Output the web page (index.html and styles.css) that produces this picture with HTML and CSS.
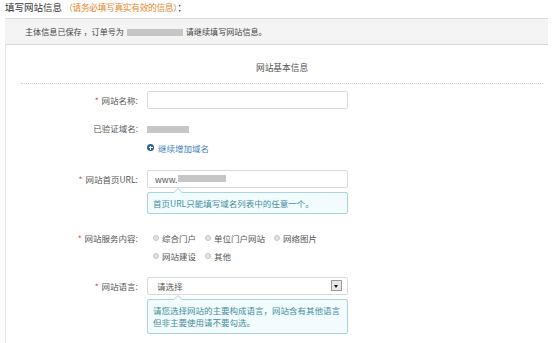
FILE: index.html
```html
<!DOCTYPE html>
<html lang="zh-CN">
<head>
<meta charset="utf-8">
<title>填写网站信息</title>
<link rel="stylesheet" href="styles.css">
</head>
<body>
<div class="page">
  <div class="title">填写网站信息 <span class="warn">（请务必填写真实有效的信息）</span>：</div>
  <div class="notice">主体信息已保存 ，订单号为<span class="mask mask-order"></span> 请继续填写网站信息。</div>
  <div class="panel">
    <div class="section-head">网站基本信息</div>

    <div class="row row-name">
      <div class="label"><span class="req">*</span> 网站名称:</div>
      <div class="field"><div class="input"></div></div>
    </div>

    <div class="row row-domain">
      <div class="label">已验证域名:</div>
      <div class="field"><span class="mask mask-domain"></span></div>
    </div>

    <div class="row row-add">
      <div class="label"></div>
      <div class="field"><a class="add-link"><span class="plus"></span>继续增加域名</a></div>
    </div>

    <div class="row row-url">
      <div class="label"><span class="req">*</span> 网站首页URL:</div>
      <div class="field">
        <div class="input"><span class="val">www.</span><span class="mask mask-url"></span></div>
        <div class="tip">首页URL只能填写域名列表中的任意一个。</div>
      </div>
    </div>

    <div class="row row-service">
      <div class="label"><span class="req">*</span> 网站服务内容:</div>
      <div class="field radios">
        <span class="radio"><i></i>综合门户</span>
        <span class="radio"><i></i>单位门户网站</span>
        <span class="radio"><i></i>网络图片</span>
        <span class="radio"><i></i>网站建设</span>
        <span class="radio"><i></i>其他</span>
      </div>
    </div>

    <div class="row row-lang">
      <div class="label"><span class="req">*</span> 网站语言:</div>
      <div class="field">
        <div class="input select"><span class="val">请选择</span><span class="arrow"></span></div>
        <div class="tip tip-2">请您选择网站的主要构成语言，网站含有其他语言<br>但非主要使用请不要勾选。</div>
      </div>
    </div>
  </div>
</div>
</body>
</html>
```

FILE: styles.css
```css
* { box-sizing: border-box; }
html, body { margin: 0; padding: 0; background: #fff; }
body {
  font-family: "Microsoft YaHei", "Noto Sans CJK SC", "Noto Sans", sans-serif;
  font-size: 8.5px;
  color: #555;
  width: 553px;
  height: 343px;
  overflow: hidden;
}
.page { padding: 0 5px; }
.title {
  font-size: 9.5px;
  color: #333;
  height: 18px;
  line-height: 14px;
}
.warn { color: #e8862a; font-size: 8.7px; letter-spacing: -0.3px; }
.notice {
  width: 543px;
  height: 27px;
  background: #f4f4f4;
  border-top: 1px solid #dcdcdc;
  border-bottom: 1px solid #d6d6d6;
  padding-left: 20px;
  line-height: 25px;
  color: #444;
  font-size: 8.1px;
}
.notice .mask { margin-left: 3px; }
.mask {
  display: inline-block;
  background: #c6c6c6;
  vertical-align: middle;
}
.mask-order { width: 56px; height: 7px; margin: 0 1px 1px 2px; }
.mask-domain { width: 42px; height: 7px; margin-top: -1px; }
.mask-url { width: 48px; height: 7px; margin-left: 1px; }

.panel {
  width: 543px;
  height: 300px;
  border-left: 1px solid #e4e4e4;
}
.section-head {
  margin: 0 5px 0 15px;
  height: 39px;
  padding-top: 16px;
  text-align: center;
  color: #555;
  border-bottom: 1px dotted #cfcfcf;
  font-size: 8.7px;
}
.row {
  display: flex;
  align-items: flex-start;
}
.label {
  width: 132px;
  flex: none;
  text-align: right;
  color: #555;
  line-height: 18px;
}
.req { color: #d9534f; margin-right: 1px; }
.field {
  margin-left: 9px;
  width: 201px;
  flex: none;
}
.input {
  width: 201px;
  height: 18px;
  border: 1px solid #d9d9d9;
  border-radius: 2px;
  background: #fff;
  display: flex;
  align-items: center;
  padding-left: 7px;
  color: #555;
}
.row-name { margin-top: 7px; }
.row-domain { margin-top: 12px; }
.row-domain .label { line-height: 14px; }
.row-domain .field { line-height: 14px; }
.row-add { margin-top: 5px; }
.row-add .field { line-height: 14px; }
.add-link { color: #3f7fbf; display: inline-flex; align-items: center; }
.plus {
  display: inline-block;
  width: 7px; height: 7px;
  border-radius: 50%;
  background: #2f5f9e;
  position: relative;
  margin-right: 4px;
}
.plus::before, .plus::after {
  content: ""; position: absolute; background: #fff;
}
.plus::before { left: 1.5px; top: 3px; width: 4px; height: 1px; }
.plus::after { left: 3px; top: 1.5px; width: 1px; height: 4px; }

.row-url { margin-top: 15px; }
.tip {
  position: relative;
  margin-top: 4px;
  width: 201px;
  min-height: 21px;
  background: #f2fbfd;
  border: 1px solid #a9d4dc;
  border-radius: 2px;
  color: #3f8d9c;
  padding: 4px 5px;
  line-height: 12px;
}
.tip::before, .tip::after {
  content: "";
  position: absolute;
  left: 26px;
  width: 0; height: 0;
  border-left: 4px solid transparent;
  border-right: 4px solid transparent;
}
.tip::before { top: -5px; border-bottom: 4px solid #a9d4dc; }
.tip::after { top: -4px; border-bottom: 4px solid #f2fbfd; }
.tip-2 { padding: 4px 5px 5px; line-height: 12px; }

.row-service { margin-top: 16px; }
.row-service .label { line-height: 16px; }
.radios {
  display: flex;
  flex-wrap: wrap;
  padding-left: 6px;
  row-gap: 2px;
  line-height: 16px;
}
.radio {
  display: inline-flex;
  align-items: center;
  margin-right: 9px;
  color: #555;
}
.radio i {
  display: inline-block;
  width: 6px; height: 6px;
  border-radius: 50%;
  border: 1px solid #c4c4c4;
  background: #e4e4e4;
  margin-right: 3px;
}
.radio:nth-child(3) { margin-right: 0; }

.row-lang { margin-top: 13px; }
.select { justify-content: space-between; padding-right: 5px; padding-left: 9px; }
.arrow {
  width: 11px; height: 11px;
  border: 1px solid #9a9a9a;
  background: #e8e8e8;
  position: relative;
}
.arrow::after {
  content: "";
  position: absolute;
  left: 2px; top: 3.5px;
  border-left: 2.5px solid transparent;
  border-right: 2.5px solid transparent;
  border-top: 3px solid #111;
}
```
